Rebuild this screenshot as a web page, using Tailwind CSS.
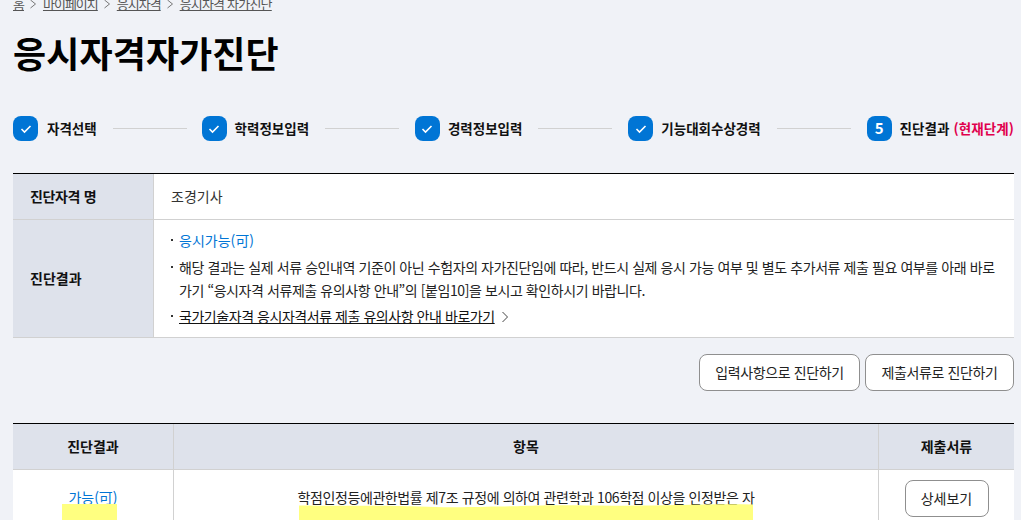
<!DOCTYPE html>
<html lang="ko">
<head>
    <meta charset="UTF-8">
    <meta name="viewport" content="width=device-width, initial-scale=1.0">
    <title>응시자격자가진단</title>
    <script src="https://cdn.jsdelivr.net/npm/@tailwindcss/browser@4"></script>
</head>
<body class="h-[520px] overflow-hidden bg-[#f0f2f7] font-['Noto_Sans_CJK_KR',sans-serif] text-[#111] text-[14px]">
    <div class="pl-[13px] pr-[7px]">
        <!-- breadcrumb -->
        <nav class="-mt-[6px] flex h-[20px] items-center gap-[5.5px] text-[13px] tracking-[-1px] text-[#555]">
            <a class="underline">홈</a>
            <svg class="w-[8px] h-[10px]" viewBox="0 0 8 10" fill="none" stroke="#777" stroke-width="1"><path d="M1.5 1l5 4-5 4"/></svg>
            <a class="underline">마이페이지</a>
            <svg class="w-[8px] h-[10px]" viewBox="0 0 8 10" fill="none" stroke="#777" stroke-width="1"><path d="M1.5 1l5 4-5 4"/></svg>
            <a class="underline">응시자격</a>
            <svg class="w-[8px] h-[10px]" viewBox="0 0 8 10" fill="none" stroke="#777" stroke-width="1"><path d="M1.5 1l5 4-5 4"/></svg>
            <a class="underline tracking-[-0.8px]">응시자격 자가진단</a>
        </nav>

        <h1 class="mt-[12px] text-[36px] leading-[52px] font-bold tracking-[0.1px] text-black">응시자격자가진단</h1>

        <!-- steps -->
        <div class="mt-[38px] flex items-center h-[25px] font-bold text-[13.5px]">
            <span class="flex w-[25px] h-[25px] items-center justify-center rounded-[8px] bg-[#0075d5]"><svg class="w-[12px] h-[10px]" viewBox="0 0 12 10" fill="none" stroke="#fff" stroke-width="1.6"><path d="M1.5 5l3 3 6-6"/></svg></span>
            <span class="ml-[9px]">자격선택</span>
            <span class="ml-[16px] mr-[15px] h-px flex-1 bg-[#d1d1d1]"></span>
            <span class="flex w-[25px] h-[25px] items-center justify-center rounded-[8px] bg-[#0075d5]"><svg class="w-[12px] h-[10px]" viewBox="0 0 12 10" fill="none" stroke="#fff" stroke-width="1.6"><path d="M1.5 5l3 3 6-6"/></svg></span>
            <span class="ml-[8px]">학력정보입력</span>
            <span class="mx-[16px] h-px flex-1 bg-[#d1d1d1]"></span>
            <span class="flex w-[25px] h-[25px] items-center justify-center rounded-[8px] bg-[#0075d5]"><svg class="w-[12px] h-[10px]" viewBox="0 0 12 10" fill="none" stroke="#fff" stroke-width="1.6"><path d="M1.5 5l3 3 6-6"/></svg></span>
            <span class="ml-[8px]">경력정보입력</span>
            <span class="mx-[16px] h-px flex-1 bg-[#d1d1d1]"></span>
            <span class="flex w-[25px] h-[25px] items-center justify-center rounded-[8px] bg-[#0075d5]"><svg class="w-[12px] h-[10px]" viewBox="0 0 12 10" fill="none" stroke="#fff" stroke-width="1.6"><path d="M1.5 5l3 3 6-6"/></svg></span>
            <span class="ml-[8px]">기능대회수상경력</span>
            <span class="mx-[16px] h-px flex-1 bg-[#d1d1d1]"></span>
            <span class="flex w-[25px] h-[25px] items-center justify-center rounded-[8px] bg-[#0075d5] text-white text-[15px]">5</span>
            <span class="ml-[8px] tracking-[0.1px]">진단결과 <span class="text-[#e0004d]">(현재단계)</span></span>
        </div>

        <!-- summary table -->
        <div class="mt-[32px] border-t border-black border-b-[#d1d1d1] border-b bg-white">
            <div class="flex h-[46px] border-b border-[#d1d1d1]">
                <div class="flex w-[141px] items-center border-r border-[#d1d1d1] bg-[#dee2eb] pl-[17px] font-bold tracking-[-0.35px]">진단자격 명</div>
                <div class="flex flex-1 items-center pl-[17px] text-[#333]">조경기사</div>
            </div>
            <div class="flex h-[117px]">
                <div class="flex w-[141px] items-center border-r border-[#d1d1d1] bg-[#dee2eb] pl-[17px] font-bold">진단결과</div>
                <ul class="flex-1 pl-[17px] pr-[12px] pt-[9px] leading-[23px] text-[#222]">
                    <li class="relative pl-[8px] text-[#0075d5] before:absolute before:left-0 before:top-[10px] before:h-[2px] before:w-[2px] before:bg-[#333]">응시가능(可)</li>
                    <li class="relative mt-[4px] pl-[8px] tracking-[-0.42px] before:absolute before:left-0 before:top-[10px] before:h-[2px] before:w-[2px] before:bg-[#333]">해당 결과는 실제 서류 승인내역 기준이 아닌 수험자의 자가진단임에 따라, 반드시 실제 응시 가능 여부 및 별도 추가서류 제출 필요 여부를 아래 바로가기 “응시자격 서류제출 유의사항 안내”의 [붙임10]을 보시고 확인하시기 바랍니다.</li>
                    <li class="relative mt-[3px] flex items-center gap-[6px] pl-[8px] tracking-[-0.45px] before:absolute before:left-0 before:top-[10px] before:h-[2px] before:w-[2px] before:bg-[#333]">
                        <a class="text-[#111] underline">국가기술자격 응시자격서류 제출 유의사항 안내 바로가기</a>
                        <svg class="w-[8px] h-[12px]" viewBox="0 0 8 12" fill="none" stroke="#444" stroke-width="1"><path d="M1.5 1l5 5-5 5"/></svg>
                    </li>
                </ul>
            </div>
        </div>

        <!-- actions -->
        <div class="mt-[16px] flex justify-end gap-[5px]">
            <button class="h-[37px] w-[161px] rounded-[8px] border border-[#8f8f8f] bg-white tracking-[-0.4px] text-[#222]">입력사항으로 진단하기</button>
            <button class="h-[37px] w-[149px] rounded-[8px] border border-[#8f8f8f] bg-white tracking-[-0.4px] text-[#222]">제출서류로 진단하기</button>
        </div>

        <!-- result table -->
        <div class="mt-[32px] border-t border-black bg-white">
            <div class="flex h-[46px] border-b border-[#d1d1d1] bg-[#dee2eb] font-bold">
                <div class="flex w-[161px] items-center justify-center border-r border-[#d1d1d1]">진단결과</div>
                <div class="flex flex-1 items-center justify-center">항목</div>
                <div class="flex w-[136px] items-center justify-center border-l border-[#d1d1d1]">제출서류</div>
            </div>
            <div class="relative flex h-[60px]">
                <div class="flex w-[161px] justify-center border-r border-[#d1d1d1] pt-[17px] text-[#0075d5]">가능(可)</div>
                <div class="flex flex-1 justify-center pt-[17px] tracking-[-0.4px] text-[#222]">학점인정등에관한법률 제7조 규정에 의하여 관련학과 106학점 이상을 인정받은 자</div>
                <div class="flex w-[136px] justify-center border-l border-[#d1d1d1] pt-[10px]">
                    <button class="h-[37px] w-[84px] rounded-[8px] border border-[#8f8f8f] bg-white text-[#222]">상세보기</button>
                </div>
                <!-- highlighter marks -->
                <span class="absolute left-[49px] top-[34px] h-[16px] w-[55px] bg-[#ffff80]"></span>
                <svg class="absolute left-[286px] top-[33px] w-[454px] h-[17px]" viewBox="0 0 454 17" fill="#ffff80"><path d="M0 2.5C60 3 90 2 120 3.5S170 4 200 3.5 240 1.5 300 2.5 400 0.5 454 1.5V17H0Z"/></svg>
            </div>
        </div>
    </div>
</body>
</html>
